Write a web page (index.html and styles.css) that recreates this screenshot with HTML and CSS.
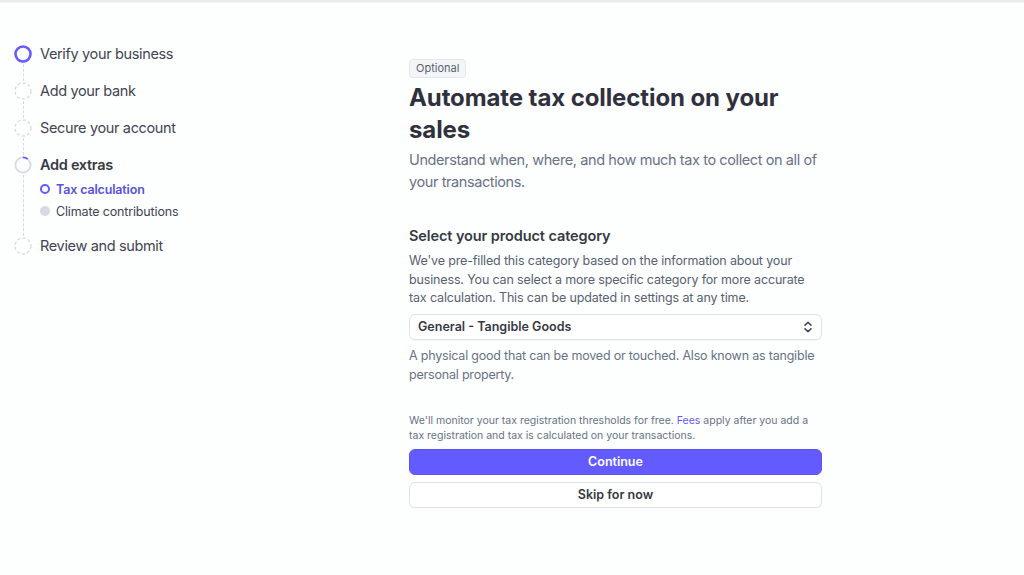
FILE: index.html
```html
<!DOCTYPE html>
<html lang="en">
<head>
<meta charset="utf-8">
<title>Automate tax collection</title>
<link rel="stylesheet" href="styles.css">
</head>
<body>
<div class="topline"></div>
<div class="page">
  <nav class="sidebar">
    <ol class="steps">
      <li class="step">
        <div class="rail">
          <svg class="ico" viewBox="0 0 18 18"><circle cx="9" cy="9" r="7.5" fill="none" stroke="#635bff" stroke-width="2.6"/></svg>
          <span class="line"></span>
        </div>
        <div class="label">Verify your business</div>
      </li>
      <li class="step">
        <div class="rail">
          <svg class="ico" viewBox="0 0 18 18"><circle cx="9" cy="9" r="8" fill="none" stroke="#d5dbe1" stroke-width="1.3" stroke-dasharray="3 2.3"/></svg>
          <span class="line"></span>
        </div>
        <div class="label">Add your bank</div>
      </li>
      <li class="step">
        <div class="rail">
          <svg class="ico" viewBox="0 0 18 18"><circle cx="9" cy="9" r="8" fill="none" stroke="#d5dbe1" stroke-width="1.3" stroke-dasharray="3 2.3"/></svg>
          <span class="line"></span>
        </div>
        <div class="label">Secure your account</div>
      </li>
      <li class="step step-extras">
        <div class="rail">
          <svg class="ico" viewBox="0 0 18 18"><circle cx="9" cy="9" r="7.6" fill="none" stroke="#d5dbe1" stroke-width="1.8"/><path d="M9 1.4 A7.6 7.6 0 0 1 13.6 3" fill="none" stroke="#635bff" stroke-width="1.8"/></svg>
          <span class="line"></span>
        </div>
        <div class="body">
          <div class="label label-strong">Add extras</div>
          <ul class="substeps">
            <li class="substep active"><span class="dot ring"></span>Tax calculation</li>
            <li class="substep"><span class="dot fill"></span>Climate contributions</li>
          </ul>
        </div>
      </li>
      <li class="step last">
        <div class="rail">
          <svg class="ico" viewBox="0 0 18 18"><circle cx="9" cy="9" r="8" fill="none" stroke="#d5dbe1" stroke-width="1.3" stroke-dasharray="3 2.3"/></svg>
        </div>
        <div class="label">Review and submit</div>
      </li>
    </ol>
  </nav>

  <main class="content">
    <span class="badge">Optional</span>
    <h1 class="title">Automate tax collection on your sales</h1>
    <p class="subtitle">Understand when, where, and how much tax to collect on all of your transactions.</p>

    <h2 class="section-title">Select your product category</h2>
    <p class="desc">We've pre-filled this category based on the information about your business. You can select a more specific category for more accurate tax calculation. This can be updated in settings at any time.</p>

    <div class="select">
      <span class="select-value">General - Tangible Goods</span>
      <svg class="chev" viewBox="0 0 10 14"><path d="M2 5.2 L5 2.4 L8 5.2 M2 8.8 L5 11.6 L8 8.8" fill="none" stroke="#474e5a" stroke-width="1.6" stroke-linecap="round" stroke-linejoin="round"/></svg>
    </div>
    <p class="help">A physical good that can be moved or touched. Also known as tangible personal property.</p>

    <p class="note">We'll monitor your tax registration thresholds for free. <a class="link" href="#">Fees</a> apply after you add a tax registration and tax is calculated on your transactions.</p>

    <button class="btn btn-primary" type="button">Continue</button>
    <button class="btn btn-secondary" type="button">Skip for now</button>
  </main>
</div>
</body>
</html>
```

FILE: styles.css
```css
* { box-sizing: border-box; }
html, body { margin: 0; padding: 0; background: #fdfefe; }
body {
  font-family: Inter, "Noto Sans", "Liberation Sans", sans-serif;
  color: #353a44;
  -webkit-font-smoothing: antialiased;
}
.topline {
  height: 3px;
  background: #e8eeee;
  border-bottom: 1px solid #f1f5f5;
}
.page {
  display: grid;
  grid-template-columns: 409px 413px;
}
.sidebar { padding: 41px 0 0 14px; }
.steps, .substeps { list-style: none; margin: 0; padding: 0; }
.step {
  display: flex;
  gap: 8px;
  min-height: 37px;
}
.rail {
  width: 18px;
  display: flex;
  flex-direction: column;
  align-items: center;
}
.ico { width: 18px; height: 18px; flex: none; margin-top: 1px; }
.line {
  flex: 1;
  width: 0;
  border-left: 1px dashed #d5dbe1;
  margin: 1px 0 0;
}
.label {
  font-size: 14.5px;
  line-height: 20px;
  color: #414552;
  letter-spacing: -0.35px;
}
.label-strong { font-weight: 600; color: #353a44; letter-spacing: -0.3px; }
.step-extras { min-height: 81px; }
.substeps { margin-top: 3px; }
.substep {
  display: flex;
  align-items: center;
  gap: 6px;
  height: 22px;
  font-size: 12.5px;
  color: #414552;
  letter-spacing: -0.15px;
}
.substep.active { color: #5851df; font-weight: 600; }
.dot { width: 10px; height: 10px; border-radius: 50%; flex: none; }
.dot.ring { border: 2px solid #635bff; }
.dot.fill { background: #d5dbe1; }

.content {
  padding-top: 56px;
  display: flex;
  flex-direction: column;
  align-items: flex-start;
}
.badge {
  display: inline-block;
  font-size: 11px;
  line-height: 15px;
  padding: 1px 6px;
  color: #596171;
  background: #f3f6f7;
  border: 1px solid #e3e8ee;
  border-radius: 4px;
}
.title {
  margin: 4px 0 0;
  font-size: 24px;
  line-height: 32px;
  font-weight: 700;
  color: #30313d;
  letter-spacing: -0.1px;
}
.subtitle {
  margin: 3px 0 0;
  font-size: 14.5px;
  line-height: 22px;
  color: #687385;
  letter-spacing: -0.4px;
}
.section-title {
  margin: 33px 0 0;
  font-size: 14.5px;
  line-height: 20px;
  font-weight: 600;
  color: #353a44;
  letter-spacing: -0.1px;
}
.desc {
  margin: 6px 0 0;
  font-size: 12.5px;
  line-height: 18.5px;
  color: #596171;
  letter-spacing: -0.15px;
}
.select {
  margin-top: 6px;
  width: 100%;
  height: 26px;
  display: flex;
  align-items: center;
  justify-content: space-between;
  padding: 0 8px 0 8px;
  border: 1px solid #dfe3e8;
  border-radius: 6px;
  background: #ffffff;
  box-shadow: 0 1px 1px rgba(0,0,0,0.04);
}
.select-value { font-size: 12.5px; font-weight: 600; color: #353a44; }
.chev { width: 10px; height: 14px; }
.help {
  margin: 6px 0 0;
  font-size: 12.5px;
  line-height: 19px;
  color: #687385;
  letter-spacing: -0.2px;
}
.note {
  margin: 29px 0 0;
  font-size: 10.5px;
  line-height: 15px;
  color: #687385;
}
.link { color: #635bff; text-decoration: none; }
.btn {
  width: 100%;
  height: 26px;
  border-radius: 6px;
  font-family: inherit;
  font-size: 12.5px;
  font-weight: 600;
  cursor: pointer;
}
.btn-primary {
  margin-top: 6px;
  background: #635bff;
  color: #ffffff;
  border: 1px solid #5c54f5;
}
.btn-secondary {
  margin-top: 7px;
  background: #ffffff;
  color: #353a44;
  border: 1px solid #dfe3e8;
  box-shadow: 0 1px 1px rgba(0,0,0,0.04);
}
```
